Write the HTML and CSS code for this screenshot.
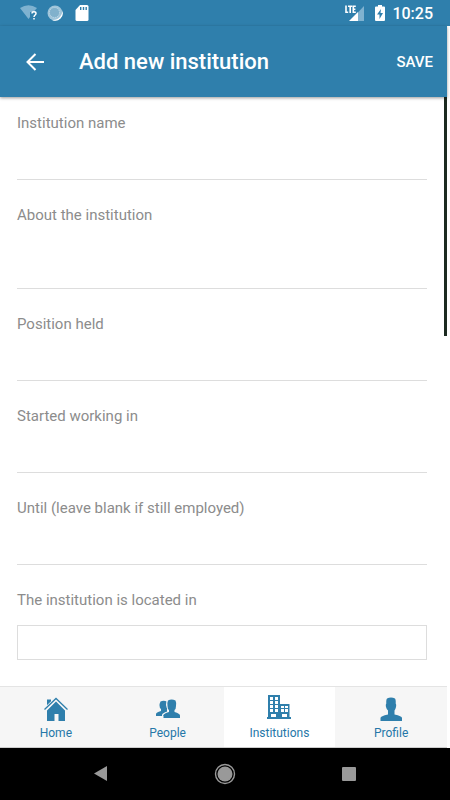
FILE: index.html
```html
<!DOCTYPE html>
<html lang="en">
<head>
<meta charset="utf-8">
<meta name="viewport" content="width=device-width, initial-scale=1">
<title>Add new institution</title>
<link rel="stylesheet" href="styles.css">
</head>
<body>
<div class="status">
  <div class="status-group">
    <svg class="wifi" width="20" height="18" viewBox="0 0 20 18"><path fill="#7fb2d0" d="M0 4Q8.500-1.500 17 4L13.500 8H10v5L8.500 15Z"/><path fill="none" stroke="#fff" stroke-width="1.500" d="M12 9.500c0-2.300 4-2.300 4 0 0 1.500-2 1.500-2 3.500M14 14v1.500"/></svg>
    <svg class="sync" width="16" height="16" viewBox="0 0 16 16"><circle cx="8" cy="8" r="7.500" fill="#a0c5da"/><path fill="#fff" d="M15 5A7.500 7.500 0 0 1 5 15Q10 15.500 13 12T15 5Z"/><circle cx="7.500" cy="7.500" r="5" fill="#81b1cc" stroke="#c1dae8" stroke-dasharray="1 1"/></svg>
    <svg class="card" width="14" height="16" viewBox="0 0 14 16"><path fill="#fff" d="M5 0h7q1.500 0 1.500 1.500v13q0 1.500-1.500 1.500H2Q.5 16 .5 14.500V5Z"/><path stroke="#2f7fac" stroke-width="1.400" d="M5.700 2v3M8.500 2v3M11.200 2v3"/></svg>
  </div>
  <div class="status-group">
    <svg class="signal" width="20" height="17" viewBox="0 0 20 17"><path fill="#7fb2d0" d="M19 1v15H5Z"/><path fill="#fff" d="M13 7V16H4Z"/><path fill="#2f7fac" d="M0 0h11v8H0z"/><path fill="none" stroke="#fff" stroke-width="1.600" d="M1 .5v6.700h2.200M3 1.300h4.200M5.200 1v7M10.800 1.300H8.300v5.900h2.500M8 4.200h2.400"/></svg>
    <svg class="battery" width="10" height="16" viewBox="0 0 10 16"><path fill="#fff" d="M3 0h4v1.500h2q1 0 1 1v12.500q0 1-1 1H1q-1 0-1-1V2.500q0-1 1-1h2Z"/><path fill="#2f7fac" d="M6 4 2 9.500h2.500V14L8 8H5.500Z"/></svg>
    <span class="clock">10:25</span>
  </div>
</div>
<div class="app">
  <header class="bar">
    <button class="back" type="button" aria-label="Back"><svg width="18" height="18" viewBox="0 0 18 18"><path fill="none" stroke="#fff" stroke-width="2" d="M18 9H2M9.500 1 1.500 9l8 8"/></svg></button>
    <h1 class="title">Add new institution</h1>
    <button class="save" type="submit" form="institution">SAVE</button>
  </header>
  <main class="content">
    <form class="form" id="institution">
      <div class="field"><label for="name">Institution name</label><input class="line" id="name" type="text"></div>
      <div class="field"><label for="about">About the institution</label><textarea class="line tall" id="about"></textarea></div>
      <div class="field"><label for="position">Position held</label><input class="line" id="position" type="text"></div>
      <div class="field"><label for="start">Started working in</label><input class="line" id="start" type="text"></div>
      <div class="field"><label for="until">Until (leave blank if still employed)</label><input class="line" id="until" type="text"></div>
      <div class="field"><label for="place">The institution is located in</label><input class="box" id="place" type="text"></div>
    </form>
    <div class="scroll"></div>
  </main>
  <nav class="tabs">
    <a class="tab" href="#home"><svg width="24" height="24" viewBox="0 0 24 24"><path fill="#2f7fac" d="M3 2.500h4v4L3 10Z"/><path fill="none" stroke="#f6f6f6" stroke-width="3.500" d="M0 13.500 12 2 24 13.500"/><path fill="none" stroke="#2f7fac" stroke-width="1.300" d="M.5 12.500 12 1.500l11.500 11"/><path fill="#2f7fac" d="m12 4.500 9 9V24h-6.500v-7h-4v7H3V13.500Z"/></svg>Home</a>
    <a class="tab" href="#people"><svg width="24" height="24" viewBox="0 0 24 24"><path fill="#2f7fac" d="M4.500 4.500q3-1.500 6.500 0V19H0v-2q0-1.500 5-3v-2Q3.500 11 3.500 8.500q0-2 1-4Z"/><path fill="#f6f6f6" d="M10.500 3h2v12l-5 3v3h-1.500v-3q0-2 5.500-3.500l1-.5v-2q-2.500-1-2.500-4Z"/><path fill="#2f7fac" d="M12 3.500q3.500-2 7.500 0 1 2 .5 5.500 0 3-1.500 4v2q5.500 1.500 5.500 3.500v2.500H7.500v-2.500q0-2 5.500-3.500v-2q-1.500-1-1.500-4-.5-3.500.5-5.500Z"/></svg>People</a>
    <a class="tab current" href="#institutions" aria-current="page"><svg width="24" height="24" viewBox="0 0 24 24"><path fill="#2f7fac" d="M1 0h12v9h9.500v13H24v2H0v-2h1Z"/><path fill="#fff" d="M3 2h3v3H3zM8 2h3v3H8zM3 6h3v3H3zM8 6h3v3H8zM3 10h3v3H3zM8 10h3v3H8zM3 14h3v3H3zM8 14h3v3H8zM14 11h3v2h-3zM18 11h3v2h-3zM14 14h3v3h-3zM18 14h3v3h-3zM4 19h5v3H4zM15 19h5v3h-5z"/></svg>Institutions</a>
    <a class="tab" href="#profile"><svg width="24" height="24" viewBox="0 0 24 24"><path fill="#2f7fac" d="M8 1.500q4-2 8 0 1 1 .7 5 .8 1 .3 3.500-.5 2-1.500 3.500v4q7.500 1.500 7.500 3.500v3H1.500v-3q0-2 7.500-3.500v-4Q7.500 12 7 10q-.5-2.500.3-3.500-.3-4 .7-5Z"/></svg>Profile</a>
  </nav>
</div>
<div class="system">
  <button type="button" aria-label="System back"><svg width="14" height="16" viewBox="0 0 14 16"><path fill="#999" d="M0 7.500 13 0v15Z"/></svg></button>
  <button type="button" aria-label="System home"><svg width="22" height="22" viewBox="0 0 22 22"><circle cx="11" cy="11" r="9.500" fill="none" stroke="#999" stroke-width="1.400"/><circle cx="11" cy="11" r="7.500" fill="#999"/></svg></button>
  <button type="button" aria-label="Recent apps"><svg width="14" height="14" viewBox="0 0 14 14"><rect width="14" height="14" rx="1" fill="#999"/></svg></button>
</div>
</body>
</html>
```
FILE: styles.css
```css
* { box-sizing: border-box; }
body {
  margin: 0;
  height: 100vh;
  display: flex;
  flex-direction: column;
  overflow: hidden;
  background: #fff;
  font-family: Roboto, sans-serif;
}
svg { display: block; flex: none; }
button { border: 0; padding: 0; background: none; font-family: inherit; }

.status {
  flex: none;
  height: 26px;
  display: flex;
  justify-content: space-between;
  padding: 0 17px 0 20px;
  background: #2f7fac;
  color: #fff;
}
.status-group { display: flex; align-items: center; }
.sync { margin-left: 7px; }
.card { margin-left: 12px; }
.battery { margin-left: 10px; }
.clock { margin-left: 7px; font-size: 16px; font-weight: 500; line-height: 28px; padding-top: 2px; }

.app {
  flex: 1;
  min-height: 0;
  display: flex;
  flex-direction: column;
  margin-right: 3px;
}
.bar {
  flex: none;
  height: 71px;
  display: flex;
  align-items: center;
  padding: 0 14px 0 26px;
  background: #2f7fac;
  color: #fff;
  box-shadow: 0 1px 3px rgba(0, 0, 0, .4);
  z-index: 1;
}
.title { flex: 1; margin: 0 0 0 35px; font-size: 22px; font-weight: 500; line-height: 28px; }
.save { color: #fff; font-size: 15px; font-weight: 500; }

.content {
  flex: 1;
  min-height: 0;
  display: flex;
  align-items: flex-start;
  overflow: hidden;
}
.form {
  flex: 1;
  display: flex;
  flex-direction: column;
  gap: 25px;
  padding: 16px 17px 0;
}
.field { display: flex; flex-direction: column; }
.field label { color: #8c8c8c; font-size: 15px; line-height: 20px; }
.line, .box { width: 100%; border: 0; border-radius: 0; outline: 0; background: #fff; font: inherit; }
.line { height: 47px; border-bottom: 1px solid #ddd; resize: none; }
.tall { height: 64px; }
.box { height: 35px; margin-top: 15px; border: 1px solid #ddd; }
.scroll { width: 3px; height: 239px; background: #1c2a20; }

.tabs {
  flex: none;
  height: 62px;
  display: flex;
  border-top: 1px solid #e4e4e4;
  border-bottom: 1px solid #ccc;
  background: #f6f6f6;
}
.tab {
  flex: 1;
  display: flex;
  flex-direction: column;
  align-items: center;
  gap: 4px;
  padding-top: 10px;
  color: #2577a8;
  font-size: 12px;
  line-height: 16px;
  text-decoration: none;
}
.current { padding-top: 8px; gap: 6px; background: #fff; }

.system {
  flex: none;
  height: 52px;
  display: flex;
  justify-content: center;
  background: #000;
}
.system button { width: 124px; display: flex; align-items: center; justify-content: center; }
```
